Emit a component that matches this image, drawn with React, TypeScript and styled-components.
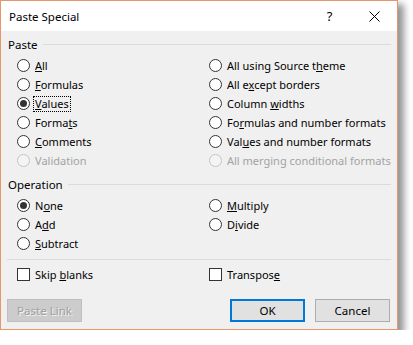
import { FC, ReactNode } from 'react'
import styled, { createGlobalStyle } from 'styled-components'

const GlobalStyle = createGlobalStyle`
  html, body {
    margin: 0;
    padding: 0;
    background: #ffffff;
  }
  body {
    font-family: 'Noto Sans', 'Liberation Sans', sans-serif;
    font-size: 11px;
    color: #000;
  }
`

const Window = styled.div`
  box-sizing: border-box;
  width: 398px;
  height: 330px;
  border: 1px solid #e9956c;
  background: #f0f0f0;
  box-shadow: 5px 5px 7px 1px rgba(0, 0, 0, 0.42);
  display: flex;
  flex-direction: column;
`
const TitleBar = styled.div`
  height: 30px;
  background: #ffffff;
  display: flex;
  align-items: center;
  padding-left: 8px;
`
const Title = styled.div`
  flex: 1;
  font-size: 11.5px;
`
const TitleButton = styled.div`
  width: 45px;
  height: 30px;
  display: flex;
  align-items: center;
  justify-content: center;
  font-size: 13px;
`
const Body = styled.div`
  flex: 1;
  display: flex;
  flex-direction: column;
  padding: 4px 6px 7px 6px;
`
const GroupHeader = styled.div<{ $top?: number }>`
  display: flex;
  align-items: center;
  height: 18px;
  margin-top: ${p => p.$top ?? 0}px;
  padding-left: 1px;
  gap: 5px;
  font-size: 11.5px;
  &::after {
    content: '';
    flex: 1;
    height: 1px;
    background: #dcdcdc;
  }
`
const OptionGrid = styled.div<{ $top: number }>`
  display: grid;
  grid-template-columns: 192px 1fr;
  grid-auto-rows: 19px;
  padding-left: 10px;
  margin-top: ${p => p.$top}px;
`
const Option = styled.div<{ $disabled?: boolean }>`
  display: flex;
  align-items: center;
  gap: 4px;
  white-space: nowrap;
  color: ${p => (p.$disabled ? '#a3a3a3' : '#000')};
`
const Radio = styled.span<{ $checked?: boolean; $disabled?: boolean }>`
  box-sizing: border-box;
  width: 13px;
  height: 13px;
  border-radius: 50%;
  border: 1px solid ${p => (p.$disabled ? '#c4c4c4' : '#333333')};
  background: ${p => (p.$disabled ? '#f4f4f4' : '#ffffff')};
  display: flex;
  align-items: center;
  justify-content: center;
  &::after {
    content: '';
    display: ${p => (p.$checked ? 'block' : 'none')};
    width: 7px;
    height: 7px;
    border-radius: 50%;
    background: #333333;
  }
`
const Check = styled.span`
  box-sizing: border-box;
  width: 13px;
  height: 13px;
  border: 1px solid #333333;
  background: #ffffff;
`
const Label = styled.span<{ $focused?: boolean }>`
  padding: 0 1px;
  outline: ${p => (p.$focused ? '1px dotted #000' : 'none')};
  line-height: 14px;
`
const Separator = styled.div`
  height: 1px;
  background: #dcdcdc;
  margin-top: 6px;
`
const Footer = styled.div`
  display: flex;
  margin-top: auto;
  padding-right: 1px;
`
const Button = styled.button<{ $primary?: boolean }>`
  box-sizing: border-box;
  width: 75px;
  height: 23px;
  margin: 0;
  font-family: inherit;
  font-size: 11.5px;
  background: ${p => (p.disabled ? '#cccccc' : '#e1e1e1')};
  color: ${p => (p.disabled ? '#a0a0a0' : '#000')};
  border: ${p => (p.$primary ? '2px solid #0078d7' : p.disabled ? '1px solid #bfbfbf' : '1px solid #adadad')};
  text-shadow: ${p => (p.disabled ? '1px 1px 0 #f4f4f4' : 'none')};
  padding: 0;
  & + & {
    margin-left: 10px;
  }
`
const Spacer = styled.div`
  flex: 1;
`

type Opt = { label: ReactNode; checked?: boolean; disabled?: boolean; focused?: boolean }

const pasteOptions: Opt[] = [
  { label: <><u>A</u>ll</> },
  { label: <>All using Source t<u>h</u>eme</> },
  { label: <><u>F</u>ormulas</> },
  { label: <>All e<u>x</u>cept borders</> },
  { label: <><u>V</u>alues</>, checked: true, focused: true },
  { label: <>Column <u>w</u>idths</> },
  { label: <>Forma<u>t</u>s</> },
  { label: <>Fo<u>r</u>mulas and number formats</> },
  { label: <><u>C</u>omments</> },
  { label: <>Val<u>u</u>es and number formats</> },
  { label: 'Validation', disabled: true },
  { label: 'All merging conditional formats', disabled: true },
]

const operationOptions: (Opt | null)[] = [
  { label: <>N<u>o</u>ne</>, checked: true },
  { label: <><u>M</u>ultiply</> },
  { label: <>A<u>d</u>d</> },
  { label: <>D<u>i</u>vide</> },
  { label: <><u>S</u>ubtract</> },
  null,
]

const RadioOption: FC<{ opt: Opt }> = ({ opt }) => (
  <Option $disabled={opt.disabled}>
    <Radio $checked={opt.checked} $disabled={opt.disabled} />
    <Label $focused={opt.focused}>{opt.label}</Label>
  </Option>
)

const CloseIcon = () => (
  <svg width="11" height="11" viewBox="0 0 11 11">
    <path d="M0.5 0.5 L10.5 10.5 M10.5 0.5 L0.5 10.5" stroke="#000" strokeWidth="1" />
  </svg>
)

const App: FC = () => (
  <>
    <GlobalStyle />
    <Window>
      <TitleBar>
        <Title>Paste Special</Title>
        <TitleButton>?</TitleButton>
        <TitleButton><CloseIcon /></TitleButton>
      </TitleBar>
      <Body>
        <GroupHeader>Paste</GroupHeader>
        <OptionGrid $top={3}>
          {pasteOptions.map((o, i) => <RadioOption key={i} opt={o} />)}
        </OptionGrid>
        <GroupHeader $top={5}>Operation</GroupHeader>
        <OptionGrid $top={3}>
          {operationOptions.map((o, i) => (o ? <RadioOption key={i} opt={o} /> : <div key={i} />))}
        </OptionGrid>
        <Separator />
        <OptionGrid $top={5}>
          <Option>
            <Check />
            <Label>Skip <u>b</u>lanks</Label>
          </Option>
          <Option>
            <Check />
            <Label>Transpos<u>e</u></Label>
          </Option>
        </OptionGrid>
        <Footer>
          <Button disabled>Paste Link</Button>
          <Spacer />
          <Button $primary>OK</Button>
          <Button>Cancel</Button>
        </Footer>
      </Body>
    </Window>
  </>
)

export default App
